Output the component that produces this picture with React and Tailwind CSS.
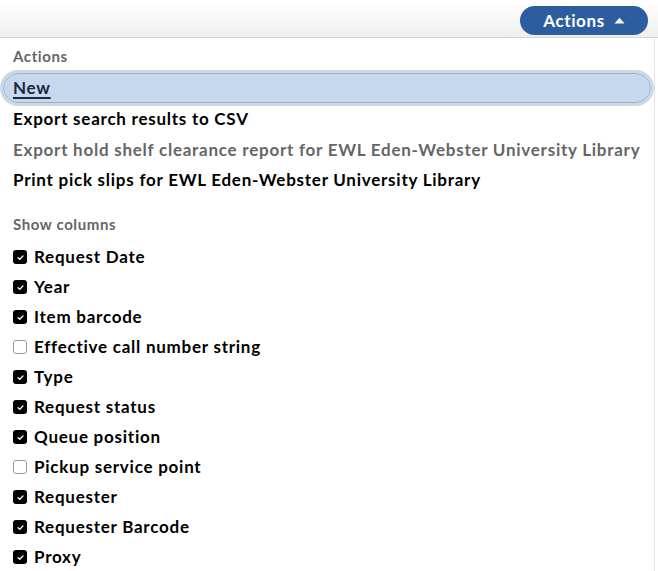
import React from "react";

const font = { fontFamily: "Lato, 'Noto Sans', sans-serif" };

function Check({ checked }) {
  if (checked) {
    return (
      <span className="flex h-[14px] w-[14px] shrink-0 items-center justify-center rounded-[3px] bg-black">
        <svg width="9" height="9" viewBox="0 0 10 10" fill="none">
          <path d="M2.3 5.2 L4.2 7 L7.8 3.2" stroke="white" strokeWidth="1.5" strokeLinecap="round" strokeLinejoin="round" />
        </svg>
      </span>
    );
  }
  return <span className="h-[14px] w-[14px] shrink-0 rounded-[3px] border border-[#9a9a9a] bg-white" />;
}

const columns = [
  ["Request Date", true],
  ["Year", true],
  ["Item barcode", true],
  ["Effective call number string", false],
  ["Type", true],
  ["Request status", true],
  ["Queue position", true],
  ["Pickup service point", false],
  ["Requester", true],
  ["Requester Barcode", true],
  ["Proxy", true],
];

const item = "whitespace-nowrap text-[17px] font-bold tracking-[0.75px]";

export default function App() {
  return (
    <div className="h-[571px] w-[658px] overflow-hidden bg-white" style={font}>
      <div className="flex h-[38px] items-start justify-end border-b border-[#d4d4d4] bg-gradient-to-b from-white to-[#efefef] pr-[10px] pt-[6px]">
        <button className="flex h-[29px] w-[128px] items-center justify-center gap-[9px] rounded-full bg-[#2c5e9f] text-[17px] font-bold tracking-[0.6px] text-white">
          <span>Actions</span>
          <svg width="11" height="7" viewBox="0 0 11 7"><path d="M0.5 6.5 L5.5 0.8 L10.5 6.5 Z" fill="white" /></svg>
        </button>
      </div>
      <div className="mr-[3px] border-r border-[#e2e2e2] pt-[9px]">
        <div className="px-[13px] text-[15px] font-bold tracking-[0.6px] text-[#666666] leading-[18px]">Actions</div>
        <div className="mt-[5px] flex flex-col">
          <div className="-mb-[2px] rounded-full border-[3px] border-[#c8d9ee]">
            <div className="flex h-[30px] items-center rounded-full border border-[#a8aeb8] bg-[#c5d8ee] pl-[9px]">
              <span className={`${item} text-[#1a2740] underline decoration-[2px] underline-offset-[3px]`}>New</span>
            </div>
          </div>
          <div className={`flex h-[30px] items-center px-[13px] ${item} text-black`}>Export search results to CSV</div>
          <div className={`flex h-[31px] items-center px-[13px] ${item} text-[#666666]`}>Export hold shelf clearance report for EWL Eden-Webster University Library</div>
          <div className={`flex h-[30px] items-center px-[13px] ${item} text-black`}>Print pick slips for EWL Eden-Webster University Library</div>
        </div>
        <div className="mt-[20px] px-[13px] text-[15px] font-bold tracking-[0.6px] text-[#666666] leading-[18px]">Show columns</div>
        <div className="mt-[9px] flex flex-col">
          {columns.map(([label, checked]) => (
            <div key={label} className="flex h-[30px] items-center gap-[7px] px-[13px]">
              <Check checked={checked} />
              <span className={`${item} text-black`}>{label}</span>
            </div>
          ))}
        </div>
      </div>
    </div>
  );
}
